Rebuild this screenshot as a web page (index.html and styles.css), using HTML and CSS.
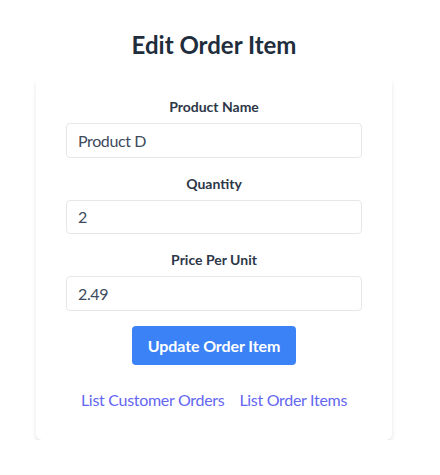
FILE: index.html
```html
<!DOCTYPE html>
<html>
<head>
<meta charset="utf-8">
<link rel="stylesheet" href="styles.css">
</head>
<body>
<div class="page">
  <h1 class="title">Edit Order Item</h1>
  <div class="card">
    <form class="form">
      <div class="field">
        <label class="label">Product Name</label>
        <input class="input" type="text" value="Product D">
      </div>
      <div class="field">
        <label class="label">Quantity</label>
        <input class="input" type="text" value="2">
      </div>
      <div class="field">
        <label class="label">Price Per Unit</label>
        <input class="input" type="text" value="2.49">
      </div>
      <div class="actions">
        <button class="btn" type="button">Update Order Item</button>
      </div>
    </form>
    <div class="links">
      <a class="link" href="#">List Customer Orders</a>
      <a class="link" href="#">List Order Items</a>
    </div>
  </div>
</div>
</body>
</html>
```

FILE: styles.css
```css
* { box-sizing: border-box; }
html, body { margin: 0; padding: 0; background: #fff; }
body {
  font-family: Lato, "Open Sans", sans-serif;
  color: #2d3748;
}
.page {
  width: 428px;
  padding-top: 29px;
  display: flex;
  flex-direction: column;
  align-items: center;
}
.title {
  margin: 0 0 16px;
  font-size: 24px;
  line-height: 32px;
  font-weight: 700;
  color: #1f2d3d;
}
.card {
  width: 356px;
  background: #fff;
  border-radius: 6px;
  box-shadow: 0 4px 6px -1px rgba(0,0,0,0.1), 0 2px 4px -1px rgba(0,0,0,0.06);
  padding: 20px 30px 28px;
}
.form { display: flex; flex-direction: column; }
.field { display: flex; flex-direction: column; margin-bottom: 16px; }
.label {
  text-align: center;
  font-size: 14px;
  line-height: 20px;
  font-weight: 700;
  color: #2d3748;
  margin-bottom: 6px;
}
.input {
  height: 34.5px;
  width: 100%;
  border: 1px solid #e5e7eb;
  border-radius: 4px;
  padding: 0 11px;
  font: inherit;
  font-size: 16px;
  letter-spacing: -0.4px;
  color: #3d4a5c;
  background: #fff;
  outline: none;
}
.actions { display: flex; justify-content: center; margin-top: -1px; }
.btn {
  width: 164px;
  height: 39px;
  border: none;
  border-radius: 4px;
  background: #3b82f6;
  color: #fff;
  font: inherit;
  font-size: 16px;
  font-weight: 700;
  letter-spacing: -0.1px;
}
.links {
  display: flex;
  justify-content: center;
  gap: 15px;
  margin-top: 23px;
  line-height: 24px;
}
.link {
  color: #6366f1;
  text-decoration: none;
  font-size: 16px;
  letter-spacing: -0.3px;
  white-space: nowrap;
}
```
